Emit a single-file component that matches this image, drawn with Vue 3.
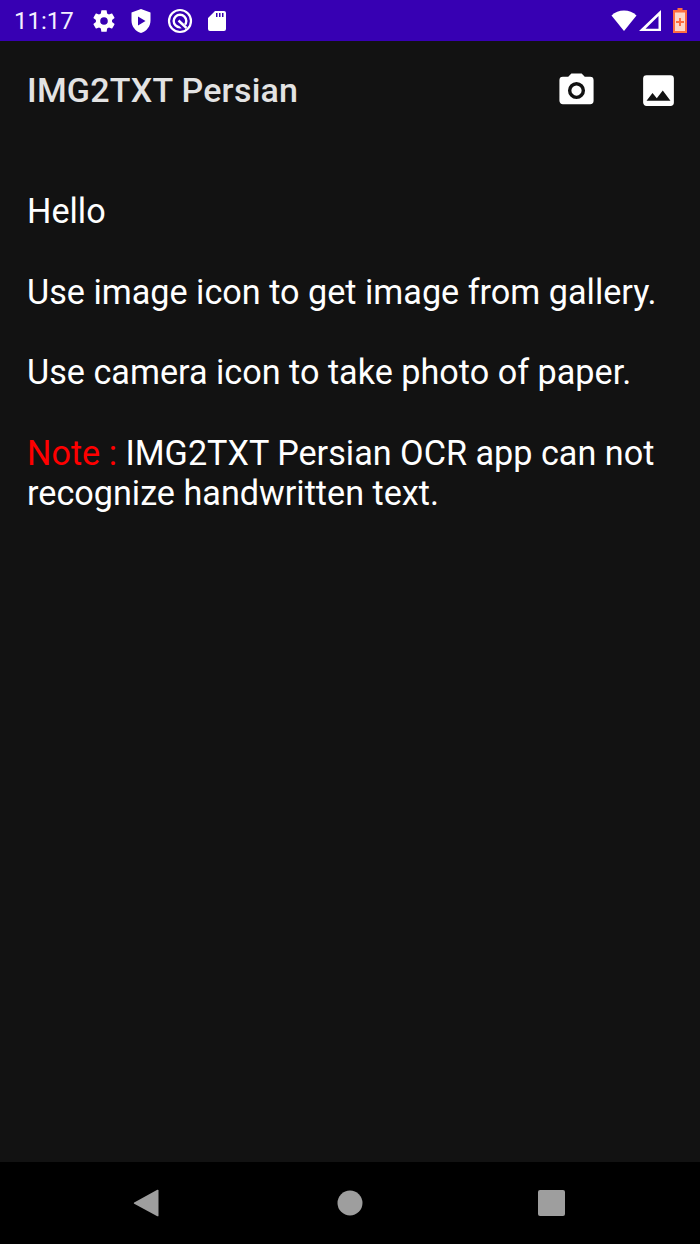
<template>
  <div class="screen">
    <div class="status-bar">
      <span class="clock">11:17</span>
      <div class="status-icons">
        <svg width="26" height="26" viewBox="0 0 24 24"><path fill="#fff" d="M19.4 13c.04-.33.06-.66.06-1s-.02-.67-.06-1l2.100-1.650c.2-.15.25-.42.13-.64l-2-3.460c-.12-.22-.39-.3-.61-.22l-2.490 1c-.52-.4-1.080-.73-1.690-.98l-.38-2.650A.49.49 0 0 0 14 2h-4c-.25 0-.46.18-.49.42l-.38 2.650c-.61.25-1.170.59-1.690.98l-2.490-1c-.23-.09-.49 0-.61.22l-2 3.460c-.13.22-.07.49.12.64L4.570 11c-.04.33-.07.67-.07 1s.03.67.07 1l-2.110 1.650c-.19.15-.24.42-.12.64l2 3.460c.12.22.39.3.61.22l2.490-1c.52.4 1.080.73 1.690.98l.38 2.650c.03.24.24.42.49.42h4c.25 0 .46-.18.49-.42l.38-2.650c.61-.25 1.170-.59 1.690-.98l2.490 1c.23.09.49 0 .61-.22l2-3.460c.12-.22.07-.49-.12-.64L19.4 13zM12 15.500a3.500 3.500 0 1 1 0-7 3.500 3.500 0 0 1 0 7z"/></svg>
        <svg width="22" height="26" viewBox="0 0 22 26"><path fill="#fff" fill-rule="evenodd" d="M11 1 1.500 4.500v8c0 6 4 10.800 9.500 12.500 5.500-1.700 9.500-6.500 9.500-12.500v-8L11 1zM8 8.500v9l7.500-4.500L8 8.500z"/></svg>
        <svg class="q-icon" width="26" height="26" viewBox="0 0 26 26"><circle cx="13" cy="13" r="11" fill="none" stroke="#fff" stroke-width="2.200"/><circle cx="13" cy="13" r="6.300" fill="none" stroke="#fff" stroke-width="2.400"/><path d="M11 13.500l7.500 7" stroke="#3700b3" stroke-width="5"/><path d="M11.500 12.500l8 7.500" stroke="#fff" stroke-width="2.400"/></svg>
        <svg class="sd-icon" width="20" height="24" viewBox="0 0 20 24"><path fill="#fff" fill-rule="evenodd" d="M8 2h9a2 2 0 0 1 2 2v16a2 2 0 0 1-2 2H3a2 2 0 0 1-2-2V9zM9 4v4h1.500V4zM12 4v4h1.500V4zM15 4v4h1.500V4z"/></svg>
      </div>
      <div class="spacer"></div>
      <div class="system-icons">
        <svg width="26" height="21" viewBox="0 0 26 21"><path fill="#fff" d="M13 21 .5 5.500C4 2.200 8.200.500 13 .500s9 1.700 12.500 5z"/></svg>
        <svg width="22" height="21" viewBox="0 0 22 21"><path fill="#fff" fill-rule="evenodd" d="M22 0v21H0zM19.500 6 6.500 18.800h13z"/></svg>
        <svg width="14" height="25" viewBox="0 0 14 25"><path fill="#ffd9c9" d="M1 3h12v22H1z"/><path fill="#ff6e40" fill-rule="evenodd" d="M4.500 0h5v2H14v23H0V2h4.500zM2 4.500V23h10V4.500zM6 10h2v3h3v2H8v3H6v-3H3v-2h3z"/></svg>
      </div>
    </div>

    <header class="app-bar">
      <h1 class="title">IMG2TXT Persian</h1>
      <div class="actions">
        <svg width="41" height="41" viewBox="0 0 24 24"><path fill="#fff" fill-rule="evenodd" d="M9 2 7.170 4H4a2 2 0 0 0-2 2v12c0 1.100.9 2 2 2h16a2 2 0 0 0 2-2V6a2 2 0 0 0-2-2h-3.170L15 2H9zm3 15a5 5 0 1 1 0-10 5 5 0 0 1 0 10zm0-2a3 3 0 1 0 0-6 3 3 0 0 0 0 6z"/></svg>
        <svg width="41" height="41" viewBox="0 0 24 24"><path fill="#fff" d="M21 19V5a2 2 0 0 0-2-2H5a2 2 0 0 0-2 2v14c0 1.100.9 2 2 2h14a2 2 0 0 0 2-2zM8.500 13.500l2.500 3 3.500-4.500 4.500 6H5l3.500-4.500z"/></svg>
      </div>
    </header>

    <main class="content">
      <p>Hello</p>
      <p>Use image icon to get image from gallery.</p>
      <p>Use camera icon to take photo of paper.</p>
      <p><span class="note">Note : </span>IMG2TXT Persian OCR app can not recognize handwritten text.</p>
    </main>

    <nav class="nav-bar">
      <svg width="28" height="28" viewBox="0 0 28 28"><path fill="#9e9e9e" d="M25.500 1.500v25c0 .8-.6 1-1.200.7L1.200 14.700c-.5-.3-.5-1 0-1.300L24.300.8c.6-.3 1.200 0 1.200.7z"/></svg>
      <svg width="26" height="26" viewBox="0 0 26 26"><circle cx="13" cy="13" r="12.500" fill="#9e9e9e"/></svg>
      <svg width="27" height="26" viewBox="0 0 27 26"><rect width="27" height="26" rx="2" fill="#9e9e9e"/></svg>
    </nav>
  </div>
</template>

<script setup>
</script>

<style>
html, body {
  background: #121212;
}
</style>

<style scoped>
.screen {
  width: 700px;
  height: 1244px;
  display: flex;
  flex-direction: column;
  background: #121212;
  color: #fff;
  font-family: Roboto, sans-serif;
  overflow: hidden;
}
.status-bar {
  height: 41px;
  flex: none;
  display: flex;
  align-items: center;
  padding: 0 13px 0 14px;
  background: #3700b3;
}
.clock {
  font-size: 24px;
  color: #f3efff;
}
.status-icons {
  display: flex;
  align-items: center;
  gap: 13px;
  margin-left: 17px;
}
.q-icon {
  margin-left: 2px;
}
.sd-icon {
  margin-left: 1px;
}
.spacer {
  flex: 1;
}
.system-icons {
  display: flex;
  align-items: center;
  gap: 2px;
}
.system-icons svg:last-child {
  margin-left: 10px;
}
.app-bar {
  height: 98px;
  flex: none;
  display: flex;
  align-items: center;
  justify-content: space-between;
  padding: 0 21px 0 27px;
}
.title {
  margin: 0;
  font-size: 34px;
  letter-spacing: 0.25px;
  font-weight: 500;
  color: #e3e3e3;
}
.actions {
  display: flex;
  gap: 41px;
}
.content {
  flex: 1;
  padding: 52px 27px 0;
  font-size: 34.2px;
  line-height: 40.3px;
}
.content p {
  margin: 0 0 40.3px;
}
.note {
  color: #ff0000;
}
.nav-bar {
  height: 82px;
  flex: none;
  display: flex;
  align-items: center;
  justify-content: space-between;
  padding: 0 135px 0 133px;
  background: #000;
}
</style>
